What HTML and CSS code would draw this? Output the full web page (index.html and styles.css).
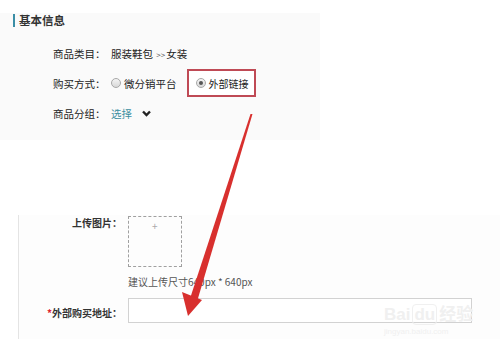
FILE: index.html
```html
<!DOCTYPE html>
<html lang="zh">
<head>
<meta charset="utf-8">
<link rel="stylesheet" href="styles.css">
</head>
<body>
<div class="page">
  <section class="panel-top">
    <h2 class="title"><span class="bar"></span>基本信息</h2>
    <div class="rows">
      <div class="row">
        <span class="lbl">商品类目：</span>
        <span class="val">服装鞋包 <span class="gt">&gt;&gt;</span>女装</span>
      </div>
      <div class="row">
        <span class="lbl">购买方式：</span>
        <span class="opt"><span class="radio"></span>微分销平台</span>
        <span class="opt hl"><span class="radio on"></span>外部链接</span>
      </div>
      <div class="row">
        <span class="lbl">商品分组：</span>
        <span class="link">选择</span>
        <svg class="chev" width="9" height="7" viewBox="0 0 9 7"><polyline points="1,1.5 4.5,5 8,1.5" fill="none" stroke="#222" stroke-width="2.4"/></svg>
      </div>
    </div>
  </section>

  <section class="panel-bottom">
    <div class="frow upload">
      <span class="flbl">上传图片：</span>
      <div class="fcol">
        <div class="dropbox"><span class="plus">+</span></div>
        <div class="hint">建议上传尺寸640px * 640px</div>
      </div>
    </div>
    <div class="frow addr">
      <span class="flbl"><span class="req">*</span>外部购买地址：</span>
      <div class="input"></div>
    </div>
  </section>

  <div class="watermark">
    <div class="wm-logo">Bai<span class="wm-du">du</span>经验</div>
    <div class="wm-url">jingyan.baidu.com</div>
  </div>

  <svg class="arrow" width="500" height="339" viewBox="0 0 500 339">
    <polygon points="250.5,101 252.5,101 197.5,287 190.5,284" fill="#d8302e"/>
    <polygon points="188,303 182,279 202,287" fill="#d8302e"/>
  </svg>
</div>
</body>
</html>
```

FILE: styles.css
```css
html, body {
  margin: 0;
  padding: 0;
  background: #ffffff;
}
body {
  font-family: "Noto Sans CJK SC", "Liberation Sans", sans-serif;
  color: #222;
  width: 500px;
  height: 339px;
  overflow: hidden;
}
.page {
  position: relative;
  width: 500px;
  height: 339px;
}
.panel-top {
  margin-top: 13px;
  width: 320px;
  height: 127px;
  background: #fafafa;
  padding-top: 1px;
  box-sizing: border-box;
}
.title {
  margin: 0;
  display: flex;
  align-items: center;
  height: 13px;
  font-size: 11.5px;
  font-weight: bold;
  color: #333;
  line-height: 13px;
}
.bar {
  display: inline-block;
  width: 2px;
  height: 13px;
  background: #3b8ea6;
  margin-left: 13px;
  margin-right: 4px;
}
.rows {
  margin-top: 11px;
  padding-left: 53px;
}
.row {
  display: flex;
  align-items: center;
  height: 30px;
  font-size: 10.5px;
  white-space: nowrap;
}
.lbl {
  width: 58px;
  color: #222;
}
.val {
  color: #222;
}
.gt {
  font-size: 8px;
  color: #555;
  margin: 0 1px;
}
.opt {
  display: flex;
  align-items: center;
}
.radio {
  width: 8px;
  height: 8px;
  border-radius: 50%;
  border: 1px solid #a8a8a8;
  background: linear-gradient(#f4f4f4, #d8d8d8);
  margin-right: 3px;
  position: relative;
  flex: none;
}
.radio.on::after {
  content: "";
  position: absolute;
  left: 2px;
  top: 2px;
  width: 4px;
  height: 4px;
  border-radius: 50%;
  background: #555;
}
.hl {
  margin-left: 10px;
  height: 24px;
  padding: 0 5px 0 7px;
  border: 2px solid #bf4a55;
  background: #fff;
  font-size: 10px;
}
.link {
  color: #3a8ea0;
}
.chev {
  margin-left: 10px;
}
.panel-bottom {
  margin-top: 75px;
  margin-left: 18px;
  height: 124px;
  border-left: 1px solid #e4e4e4;
  background: #fdfdfd;
  padding-top: 1px;
  box-sizing: border-box;
}
.frow {
  display: flex;
  font-size: 10px;
}
.flbl {
  width: 103px;
  text-align: right;
  font-weight: bold;
  color: #333;
  margin-right: 6px;
}
.upload .flbl {
  line-height: 12px;
  margin-top: 1px;
}
.dropbox {
  width: 52px;
  height: 49px;
  border: 1px dashed #a0a0a0;
  position: relative;
}
.plus {
  position: absolute;
  left: 23px;
  top: 1px;
  color: #aaa;
  font-size: 10px;
}
.hint {
  margin-top: 9px;
  color: #555;
  font-size: 10px;
  line-height: 12px;
}
.addr {
  margin-top: 10px;
  align-items: center;
}
.addr .flbl {
  margin-top: 3px;
}
.req {
  color: #d23;
}
.input {
  width: 342px;
  height: 23px;
  border: 1px solid #d2d2d2;
  background: #fff;
}
.watermark {
  position: absolute;
  left: 384px;
  top: 292px;
  color: #f0f0f0;
  font-family: "Liberation Sans", "Noto Sans CJK SC", sans-serif;
}
.wm-logo {
  font-size: 17px;
  font-weight: bold;
  line-height: 20px;
}
.wm-du {
  border: 1px solid #f0f0f0;
  border-radius: 4px;
  padding: 0 1px;
  margin: 0 2px;
}
.wm-url {
  font-size: 8px;
  line-height: 10px;
  margin-top: 2px;
}
.arrow {
  position: absolute;
  left: 0;
  top: 0;
}
```
